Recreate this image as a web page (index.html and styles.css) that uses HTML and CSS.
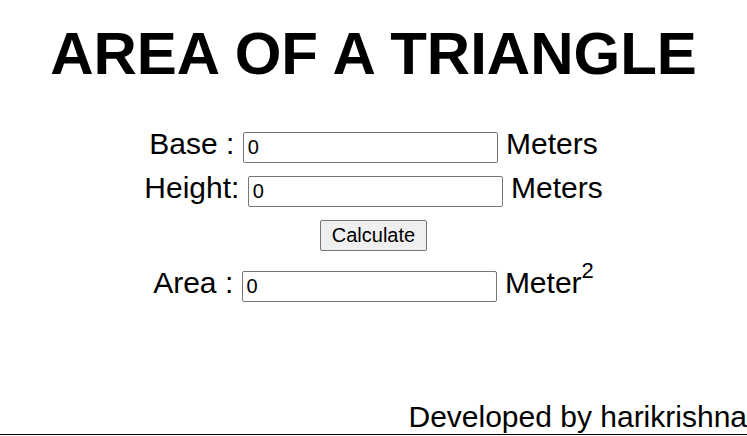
FILE: index.html
```html
<!DOCTYPE html>
<html>
<head>
<meta charset="utf-8">
<title>Area of a Triangle</title>
<link rel="stylesheet" href="styles.css">
</head>
<body>
<div class="page">
  <h1 class="title">AREA OF A TRIANGLE</h1>
  <div class="form">
    <div class="row">Base : <input class="field" type="text" value="0"> Meters</div>
    <div class="row">Height: <input class="field" type="text" value="0"> Meters</div>
    <div class="row btn-row"><button class="btn">Calculate</button></div>
    <div class="row">Area : <input class="field" type="text" value="0"> Meter<sup class="sq">2</sup></div>
  </div>
  <footer class="footer">Developed by harikrishna</footer>
</div>
</body>
</html>
```
FILE: styles.css
```css
html, body {
  margin: 0;
  padding: 0;
  background: #fff;
}
body {
  font-family: "Liberation Sans", Arial, sans-serif;
  color: #000;
}
.page {
  min-height: 436px;
  display: flex;
  flex-direction: column;
  box-sizing: border-box;
}
.title {
  margin: 19px 0 0;
  font-size: 60px;
  font-weight: bold;
  text-align: center;
  line-height: 69px;
}
.form {
  margin-top: 34px;
  font-size: 30px;
  text-align: center;
}
.row {
  height: 44px;
  line-height: 44px;
}
.field {
  box-sizing: border-box;
  width: 255px;
  height: 31px;
  font-family: "Liberation Sans", Arial, sans-serif;
  font-size: 20px;
  padding: 1px 4px;
  border: 1px solid #767676;
  border-radius: 2px;
  color: #000;
  vertical-align: baseline;
}
.btn-row {
  height: 50px;
  padding-top: 1px;
}
.btn {
  box-sizing: border-box;
  height: 31px;
  width: 107px;
  font-family: "Liberation Sans", Arial, sans-serif;
  font-size: 20px;
  background: #efefef;
  border: 1px solid #767676;
  border-radius: 2px;
  padding: 0;
  color: #000;
  vertical-align: middle;
}
.sq {
  font-size: 22px;
  line-height: 0;
  vertical-align: 15px;
}
.footer {
  margin-top: auto;
  margin-bottom: 1px;
  text-align: right;
  font-size: 30px;
  border-bottom: 1px solid #000;
  line-height: 34px;
}
```
